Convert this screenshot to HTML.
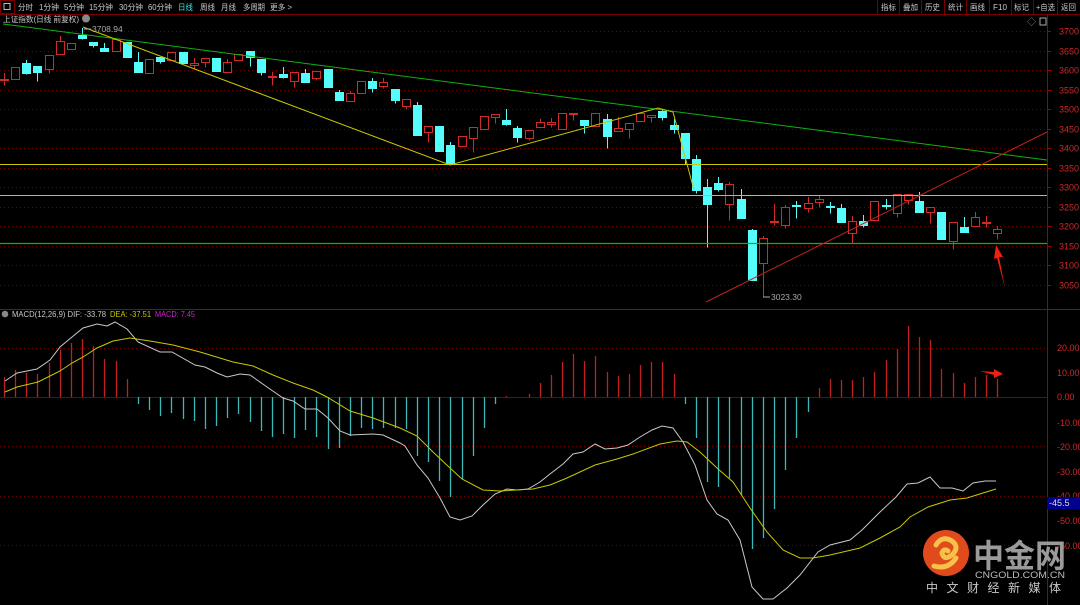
<!DOCTYPE html>
<html><head><meta charset="utf-8"><style>
html,body{margin:0;padding:0;background:#000;width:1080px;height:605px;overflow:hidden;font-family:"Liberation Sans","Noto Sans CJK SC",sans-serif}
svg{position:absolute;left:0;top:0}
</style></head><body>
<svg id="s" width="1080" height="605" xmlns="http://www.w3.org/2000/svg" font-family="Liberation Sans, Noto Sans CJK SC, sans-serif">
<rect width="1080" height="605" fill="#000"/>
<!-- toolbar -->
<line x1="0" y1="14.5" x2="1080" y2="14.5" stroke="#7a0000"/>
<rect x="0.5" y="0.5" width="14" height="13" fill="none" stroke="#7a0000"/>
<rect x="4" y="3.5" width="6" height="6" fill="none" stroke="#bbb"/>
<g font-size="8" fill="#c8c8c8">
<text x="18" y="10" textLength="15" lengthAdjust="spacingAndGlyphs">分时</text>
<text x="39" y="10" textLength="20" lengthAdjust="spacingAndGlyphs">1分钟</text>
<text x="64" y="10" textLength="20" lengthAdjust="spacingAndGlyphs">5分钟</text>
<text x="89" y="10" textLength="24" lengthAdjust="spacingAndGlyphs">15分钟</text>
<text x="119" y="10" textLength="24" lengthAdjust="spacingAndGlyphs">30分钟</text>
<text x="148" y="10" textLength="24" lengthAdjust="spacingAndGlyphs">60分钟</text>
<text x="178" y="10" fill="#40e0e0" textLength="15" lengthAdjust="spacingAndGlyphs">日线</text>
<text x="200" y="10" textLength="15" lengthAdjust="spacingAndGlyphs">周线</text>
<text x="221" y="10" textLength="15" lengthAdjust="spacingAndGlyphs">月线</text>
<text x="243" y="10" textLength="22" lengthAdjust="spacingAndGlyphs">多周期</text>
<text x="270" y="10" textLength="22" lengthAdjust="spacingAndGlyphs">更多 &gt;</text>
</g>
<g font-size="8" fill="#c8c8c8">
<text x="881" y="10" textLength="15" lengthAdjust="spacingAndGlyphs">指标</text>
<text x="903" y="10" textLength="15" lengthAdjust="spacingAndGlyphs">叠加</text>
<text x="925" y="10" textLength="15" lengthAdjust="spacingAndGlyphs">历史</text>
<text x="948" y="10" textLength="15" lengthAdjust="spacingAndGlyphs">统计</text>
<text x="970" y="10" textLength="15" lengthAdjust="spacingAndGlyphs">画线</text>
<text x="993" y="10" textLength="14" lengthAdjust="spacingAndGlyphs">F10</text>
<text x="1014" y="10" textLength="15" lengthAdjust="spacingAndGlyphs">标记</text>
<text x="1036" y="10" textLength="19" lengthAdjust="spacingAndGlyphs">+自选</text>
<text x="1061" y="10" textLength="15" lengthAdjust="spacingAndGlyphs">返回</text>
</g>
<g stroke="#7a0000"><line x1="877.5" y1="0" x2="877.5" y2="14"/><line x1="899.5" y1="0" x2="899.5" y2="14"/><line x1="921.5" y1="0" x2="921.5" y2="14"/><line x1="944.5" y1="0" x2="944.5" y2="14"/><line x1="966.5" y1="0" x2="966.5" y2="14"/><line x1="989.5" y1="0" x2="989.5" y2="14"/><line x1="1011.5" y1="0" x2="1011.5" y2="14"/><line x1="1033.5" y1="0" x2="1033.5" y2="14"/><line x1="1057.5" y1="0" x2="1057.5" y2="14"/></g>
<text x="3" y="22" font-size="8" fill="#c8c8c8" textLength="76" lengthAdjust="spacingAndGlyphs">上证指数(日线 前复权)</text>
<circle cx="86" cy="18.5" r="4" fill="#888"/>
<text x="1027" y="25" font-size="9" fill="#888">◇</text><rect x="1040" y="18" width="6" height="7" fill="none" stroke="#aaa"/>
<g id="grid"></g>
<g id="top"></g>
<g id="macd"></g>
<!-- axis -->
<line x1="1047.5" y1="15" x2="1047.5" y2="605" stroke="#a00000"/>
<line x1="0" y1="309.5" x2="1080" y2="309.5" stroke="#a00000"/>
<g id="ax" font-size="9" fill="#d02828"></g>
<rect x="1047" y="497" width="33" height="12" fill="#000090"/>
<text x="1049" y="506" font-size="9" fill="#ddd">-45.5</text>
<circle cx="5" cy="314" r="3.3" fill="#888"/>
<g font-size="8">
<text x="12" y="317" fill="#c8c8c8" textLength="94" lengthAdjust="spacingAndGlyphs">MACD(12,26,9)  DIF: -33.78</text>
<text x="110" y="317" fill="#c8c800" textLength="41" lengthAdjust="spacingAndGlyphs">DEA: -37.51</text>
<text x="155" y="317" fill="#d020d0" textLength="40" lengthAdjust="spacingAndGlyphs">MACD: 7.45</text>
</g>
<text x="92" y="32" font-size="8.5" fill="#aaa">3708.94</text>
<text x="771" y="300" font-size="8.5" fill="#aaa">3023.30</text>
<!-- logo -->
<circle cx="946" cy="553" r="23" fill="#e04a1c"/>
<path d="M936 545 q6 -10 16 -4 q8 6 0 14 q-8 6 -10 -2 q2 -5 6 -2" fill="none" stroke="#f7c24a" stroke-width="5" stroke-linecap="round"/>
<path d="M934 566 q14 4 22 -8" fill="none" stroke="#f7c24a" stroke-width="5" stroke-linecap="round"/>
<text x="973" y="567" font-size="32" font-weight="bold" fill="#9a9a9a" textLength="93" lengthAdjust="spacingAndGlyphs">中金网</text>
<text x="975" y="578" font-size="9.5" fill="#bbb" textLength="90" lengthAdjust="spacingAndGlyphs">CNGOLD.COM.CN</text>
<text x="926" y="592" font-size="12" fill="#c8c8c8" letter-spacing="8.5">中文财经新媒体</text>
</svg>
<script>
var NS="http://www.w3.org/2000/svg";
function el(p,t,a){var e=document.createElementNS(NS,t);for(var k in a)e.setAttribute(k,a[k]);document.getElementById(p).appendChild(e);return e;}
for(var k=0;k<14;k++){var y=Math.round(31+k*19.54)+0.5;el("grid","line",{x1:0,y1:y,x2:1047,y2:y,stroke:"#6a0000","stroke-dasharray":"1,3"});
var t=el("ax","text",{x:1059,y:y+3});t.textContent=(3700-k*50);el("ax","line",{x1:1047,y1:y,x2:1051,y2:y,stroke:"#a00000"});}
[348,446,496,545].forEach(function(y){el("grid","line",{x1:0,y1:y+.5,x2:1047,y2:y+.5,stroke:"#6a0000","stroke-dasharray":"1,3"});});
el("grid","line",{x1:0,y1:397.5,x2:1047,y2:397.5,stroke:"#800000"});
[["20.00",348],["10.00",373],["0.00",397],["-10.00",423],["-20.00",447],["-30.00",472],["-40.00",496],["-50.00",521],["-60.00",546]].forEach(function(a){var t=el("ax","text",{x:1057,y:a[1]+3});t.textContent=a[0];});
var C=[["u",79,79,73,85],["u",67,79,67,79],["d",63,73,60,74],["d",66,72,66,81],["u",55,69,55,73],["u",41,54,36,54],["u",43,49,43,49],["d",35,38,28,39],["d",42,45,42,47],["d",48,51,43,51],
["u",39,51,39,51],["d",42,57,42,57],["d",62,72,52,72],["u",59,73,59,73],["d",57,61,57,63],["u",52,60,52,60],["d",52,63,52,63],["u",63,65,58,69],["u",58,62,58,67],["d",58,71,58,71],
["u",62,72,59,72],["u",54,60,54,60],["d",51,57,51,66],["d",59,72,59,75],["u",76,77,72,85],["d",74,77,67,78],["u",72,81,72,87],["d",73,82,69,82],["u",71,78,71,80],["d",69,87,69,87],
["d",92,100,90,100],["u",93,101,91,101],["u",81,93,81,93],["d",81,88,78,92],["u",82,86,78,88],["d",89,100,89,103],["u",99,106,99,109],["d",105,135,102,135],["u",126,132,126,142],["d",126,151,126,151],
["d",145,164,142,164],["u",136,146,136,146],["u",127,138,127,152],["u",116,129,116,129],["u",114,117,114,123],["d",120,124,109,125],["d",128,137,126,142],["u",130,138,130,140],["u",122,127,119,127],["u",122,124,118,127],
["u",113,129,113,129],["u",113,114,113,120],["d",120,125,120,133],["u",113,126,113,126],["d",119,136,114,148],["u",128,131,117,131],["u",123,129,123,138],["u",113,121,113,121],["u",115,117,115,122],["d",111,117,109,120],
["d",125,129,119,133],["d",133,158,133,164],["d",159,190,155,193],["d",187,204,179,247],["d",183,189,177,191],["u",184,204,182,220],["d",199,218,189,218],["d",230,280,229,280],["u",238,263,236,297],["u",221,222,204,225],
["u",207,225,205,228],["d",205,206,201,218],["u",203,208,197,212],["u",199,202,196,207],["d",206,207,202,213],["d",208,222,204,222],["u",221,233,216,243],["d",221,225,215,227],["u",201,220,201,220],["d",205,206,199,209],
["u",194,213,194,217],["u",194,200,194,204],["d",201,212,192,212],["u",207,212,207,223],["d",212,239,212,239],["u",222,241,222,249],["d",227,232,217,232],["u",217,226,212,226],["u",222,223,216,227],["u",229,233,226,239]];
var CY="#54fcfc",RD="#d02a2a";
C.forEach(function(c,i){var x=Math.round(4+i*11.16)+0.5;var col=c[0]=="u"?RD:CY;
el("top","line",{x1:x,y1:c[3],x2:x,y2:c[4]+0.5,stroke:col});
var h=Math.max(c[2]-c[1],1);
if(c[0]=="u")el("top","rect",{x:x-4,y:c[1]+.5,width:8,height:h,fill:"#000",stroke:col});
else el("top","rect",{x:x-4.5,y:c[1],width:9,height:h+1,fill:col});});
el("top","line",{x1:3,y1:24,x2:1047,y2:160,stroke:"#10b010","stroke-width":1});
el("top","line",{x1:0,y1:164.5,x2:1047,y2:164.5,stroke:"#c8c800"});
el("top","line",{x1:0,y1:195.5,x2:1047,y2:195.5,stroke:"#c8c800"});
el("top","line",{x1:0,y1:243.5,x2:1047,y2:243.5,stroke:"#10b010","stroke-width":1.2});
el("top","polyline",{points:"83,27 450,165 658,108 673,112 694,190",fill:"none",stroke:"#c8c800"});
el("top","line",{x1:706,y1:302,x2:1047,y2:132,stroke:"#c02020"});
el("top","line",{x1:91,y1:29,x2:84,y2:29,stroke:"#aaa"});
el("top","line",{x1:763,y1:297,x2:770,y2:297,stroke:"#aaa"});
el("top","path",{d:"M1005 288 L999 257 L1003 257 L996 245 L994 259 L997 258 Z",fill:"#f02010"});
el("top","path",{d:"M980 371 L994 372 L994 369 L1003 374 L994 378 L994 375 Z",fill:"#f02010"});
var B=[377,370,373,374,363,350,343,339,346,359,361,379,404,410,416,413,419,421,429,426,418,414,422,431,437,434,438,430,437,449,448,436,428,429,428,428,429,456,462,481,497,479,456,428,404,396,397,394,383,375,362,354,361,356,372,376,374,365,362,362,374,404,438,482,487,478,495,549,538,509,470,438,412,388,379,380,380,377,372,360,349,326,337,340,369,373,383,377,375,379];
B.forEach(function(b,i){if(Math.abs(b-397)<1)return;var x=Math.round(4+i*11.16)+0.5;el("macd","line",{x1:x,y1:397,x2:x,y2:b,stroke:b<397?"#c02020":"#38b8b8","stroke-width":1.3});});
el("macd","polyline",{fill:"none",stroke:"#c8c8c8",points:"5,381 17,373 37,369 50,360 60,347 72,337 83,328 97,324 107,326 115,322 127,329 138,342 160,352 172,352 195,365 205,367 217,373 227,377 240,374 250,375 267,387 283,398 293,401 305,409 317,409 328,418 340,431 350,435 373,434 383,435 400,443 405,446 417,465 428,478 440,498 450,517 460,520 472,516 483,505 495,494 507,489 517,490 528,489 540,482 550,474 563,464 573,454 583,452 595,444 605,449 617,448 628,445 640,437 652,430 662,426 673,428 683,442 695,465 707,500 717,514 728,520 740,540 752,587 763,599 773,599 787,588 800,575 818,552 830,545 850,540 862,530 880,512 896,497 907,484 918,483 930,477 940,488 952,488 963,491 973,483 985,481 996,481"});
el("macd","polyline",{fill:"none",stroke:"#c8c800",points:"5,392 17,387 38,382 50,376 60,371 72,363 83,357 97,348 113,341 130,338 150,341 173,345 200,352 233,362 253,366 273,375 293,383 313,390 327,397 350,411 373,418 400,428 417,436 433,452 450,468 462,479 483,490 500,491 533,489 550,485 567,478 595,465 617,459 633,454 660,444 677,441 687,442 700,452 717,468 733,482 750,508 767,532 783,550 800,558 813,558 830,555 860,548 880,538 900,527 910,517 928,507 950,500 967,498 983,493 996,489"});
</script>
</body></html>
